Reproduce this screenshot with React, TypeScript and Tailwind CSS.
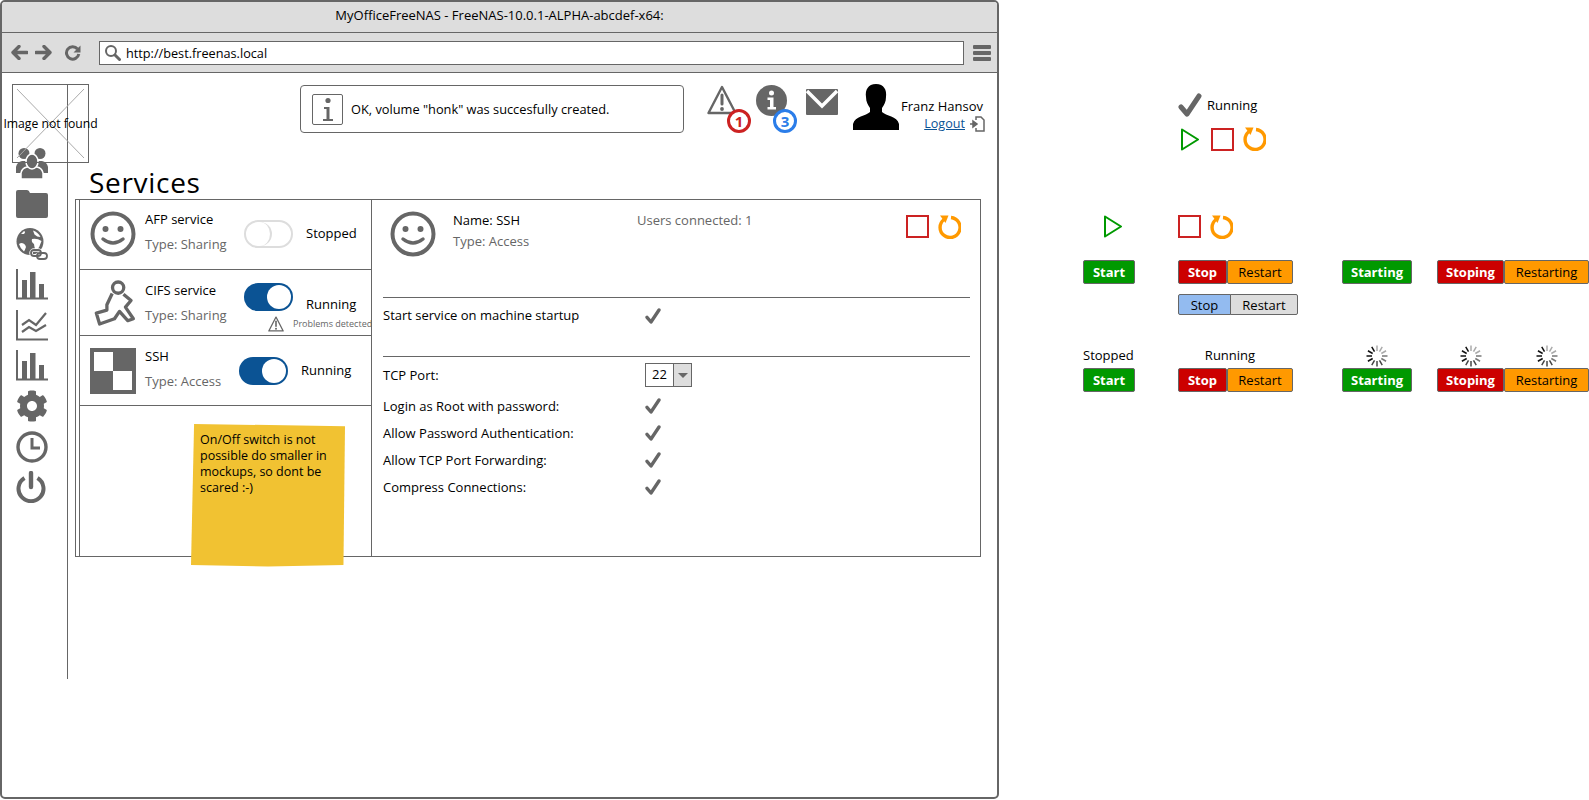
import { FaCog } from 'react-icons/fa'

const Smile = () => (
  <svg width="46" height="46" viewBox="0 0 46 46" className="shrink-0">
    <circle cx="23" cy="23" r="20.5" fill="none" stroke="#666" strokeWidth="4" />
    <circle cx="15.5" cy="18" r="3" fill="#666" />
    <circle cx="30.5" cy="18" r="3" fill="#666" />
    <path d="M13 28 Q23 36 33 28" fill="none" stroke="#666" strokeWidth="3.5" strokeLinecap="round" />
  </svg>
)

const Runner = () => (
  <svg width="43" height="48" viewBox="20 30 130 145" className="shrink-0">
    <circle cx="96" cy="56" r="17" fill="none" stroke="#666" strokeWidth="10" />
    <path d="M78 74 L62 108 L62 124 L30 133 L40 166 L85 150 L100 128 L125 156 L142 150 L118 115 L135 95 L112 76" fill="none" stroke="#666" strokeWidth="10" strokeLinejoin="round" />
  </svg>
)

const Checker = () => (
  <div className="w-[46px] h-[46px] bg-[#666] p-1 grid grid-cols-2 grid-rows-2 shrink-0">
    <div className="bg-white" />
    <div />
    <div />
    <div className="bg-white" />
  </div>
)

const Check = ({ size = 16 }: { size?: number }) => (
  <svg width={size} height={size} viewBox="0 0 24 24" className="shrink-0">
    <path d="M3 14 L9 21 L21 3" fill="none" stroke="#666" strokeWidth="5" strokeLinecap="round" strokeLinejoin="round" />
  </svg>
)

const Play = () => (
  <svg width="18" height="23" viewBox="0 0 18 23" className="shrink-0">
    <path d="M1 1.5 L17 11.5 L1 21.5 Z" fill="none" stroke="#090" strokeWidth="2" strokeLinejoin="round" />
  </svg>
)

const StopIcon = () => <div className="w-[23px] h-[23px] border-2 border-[#cc2222] shrink-0" />

const RestartIcon = () => (
  <svg width="24" height="24" viewBox="0 0 24 24" className="shrink-0">
    <path d="M7 4.5 A10 10 0 1 0 14 2.5" fill="none" stroke="#f90" strokeWidth="3.4" />
    <path d="M3 0.5 L11.5 0.5 L8.5 8 Z" fill="#f90" />
  </svg>
)

const People = () => (
  <svg width="32" height="32" viewBox="0 0 32 32">
    <g fill="#666">
      <circle cx="8" cy="6.5" r="5.5" />
      <circle cx="24" cy="6.5" r="5.5" />
      <path d="M0 26 V20 Q1 15 6 14 H10 Q15 15 16 20 V26 Z" />
      <path d="M16 26 V20 Q17 15 22 14 H26 Q31 15 32 20 V26 Z" />
      <path d="M5 32 V26 Q6 21 11 20 H21 Q26 21 27 26 V32 Z" stroke="#fff" strokeWidth="1.5" />
      <ellipse cx="16" cy="14.5" rx="6" ry="7.5" stroke="#fff" strokeWidth="1.5" />
    </g>
  </svg>
)

const Folder = () => (
  <svg width="32" height="28" viewBox="0 0 32 28">
    <path d="M0 2 Q0 0 2 0 H11 Q13 0 14 3 H30 Q32 3 32 5 V26 Q32 28 30 28 H2 Q0 28 0 26 Z" fill="#666" />
  </svg>
)

const Globe = () => (
  <svg width="32" height="33" viewBox="0 0 32 33">
    <circle cx="14" cy="13.5" r="13.5" fill="#666" />
    <path d="M17 2.5 Q22 4 24.5 9 Q21 9 18.5 6.5 Z M16 11 Q21 10 25.5 13 Q24 19 20 23 Q18 19 18 16 Q15 14 16 11 Z M5 15 Q9 15 10 19 Q9 22 8 23.5 Q4 20 3 16 Z M8 3 Q10 4 8 6 L5 6 Z" fill="#fff" />
    <g fill="none" stroke="#fff" strokeWidth="3.5">
      <rect x="15" y="22" width="10" height="6" rx="3" />
    </g>
    <g fill="none" stroke="#666" strokeWidth="1.8">
      <rect x="15" y="22" width="10" height="6" rx="3" />
      <rect x="21" y="25" width="10" height="6" rx="3" />
    </g>
  </svg>
)

const Bars = () => (
  <svg width="32" height="31" viewBox="0 0 32 31">
    <path d="M1 0 V29.5 H32" fill="none" stroke="#666" strokeWidth="2" />
    <rect x="6" y="11" width="5" height="18" fill="#666" />
    <rect x="14" y="3" width="5.5" height="26" fill="#666" />
    <rect x="23" y="15" width="5" height="14" fill="#666" />
  </svg>
)

const LineChart = () => (
  <svg width="32" height="31" viewBox="0 0 32 31">
    <path d="M1 0 V29.5 H32" fill="none" stroke="#666" strokeWidth="2" />
    <path d="M6 15 L13 10 L20 15 L30 3 M6 22 L13 17 L20 21 L30 15" fill="none" stroke="#666" strokeWidth="2.2" />
  </svg>
)

const Clock = () => (
  <svg width="32" height="32" viewBox="0 0 32 32">
    <circle cx="16" cy="16" r="14" fill="none" stroke="#666" strokeWidth="3.4" />
    <path d="M16 7 V17 H24" fill="none" stroke="#666" strokeWidth="3" />
  </svg>
)

const Power = () => (
  <svg width="30" height="32" viewBox="0 0 30 32">
    <path d="M8.5 7 A12.5 12.5 0 1 0 21.5 7" fill="none" stroke="#666" strokeWidth="4" />
    <path d="M15 2 V16" fill="none" stroke="#666" strokeWidth="4.4" strokeLinecap="round" />
  </svg>
)

const Warning = ({ size = 30 }: { size?: number }) => (
  <svg width={size} height={size} viewBox="0 0 30 30" className="shrink-0">
    <path d="M15 2 L28.5 28 H1.5 Z" fill="#fff" stroke="#666" strokeWidth="2.4" strokeLinejoin="round" />
    <path d="M15 10 V19" stroke="#666" strokeWidth="3" strokeLinecap="round" />
    <circle cx="15" cy="24" r="1.9" fill="#666" />
  </svg>
)

const Badge = ({ className, value }: { className: string; value: string }) => (
  <span className={`absolute top-[24px] w-[24px] h-[24px] rounded-full bg-white border-[3px] flex items-center justify-center text-[15px] font-bold leading-none ${className}`}>
    {value}
  </span>
)

const Toggle = ({ on }: { on: boolean }) => (
  on ? (
    <div className="w-[49px] h-[28px] rounded-full bg-[#0b5394] flex justify-end p-[2px] shrink-0">
      <div className="w-[24px] h-[24px] rounded-full bg-white" />
    </div>
  ) : (
    <div className="w-[49px] h-[28px] rounded-full border-2 border-[#ddd] flex shrink-0">
      <div className="w-[26px] h-[24px] rounded-full border-r-2 border-[#ddd]" />
    </div>
  )
)

const Spinner = () => (
  <svg width="22" height="22" viewBox="-11 -11 22 22">
    {[0, 1, 2, 3, 4, 5, 6, 7, 8, 9, 10, 11].map((i) => (
      <line
        key={i}
        x1="0"
        y1="-5"
        x2="0"
        y2="-10.5"
        stroke={i < 3 ? '#aaa' : i < 5 ? '#777' : i < 8 ? '#444' : '#111'}
        strokeWidth="1.5"
        transform={`rotate(${i * 30})`}
      />
    ))}
  </svg>
)

const Btn = ({ label, className }: { label: string; className: string }) => (
  <div className={`h-[24px] border border-[#666] rounded-[2px] flex items-center justify-center text-[13px] ${className}`}>
    {label}
  </div>
)

const sideIcons = [
  <People key="people" />,
  <Folder key="folder" />,
  <Globe key="globe" />,
  <Bars key="bars" />,
  <LineChart key="line" />,
  <Bars key="bars2" />,
  <FaCog key="cog" size={32} color="#666" />,
  <Clock key="clock" />,
  <Power key="power" />,
]

const settings = [
  'Login as Root with password:',
  'Allow Password Authentication:',
  'Allow TCP Port Forwarding:',
  'Compress Connections:',
]

export default function App() {
  return (
    <div className="w-[1589px] h-[800px] flex bg-white text-black text-[13px] leading-[16px] font-['Open_Sans','Liberation_Sans',sans-serif] overflow-hidden">
      {/* browser window */}
      <div className="w-[999px] h-[799px] border-2 border-[#666] rounded-[5px] flex flex-col shrink-0 overflow-hidden">
        <div className="h-[31px] bg-[#ddd] border-b border-[#666] text-center pt-[5px] shrink-0">
          MyOfficeFreeNAS - FreeNAS-10.0.1-ALPHA-abcdef-x64:
        </div>
        <div className="h-[40px] bg-[#ddd] border-b border-[#666] flex items-center shrink-0">
          <div className="w-[97px] flex items-center pl-[9px] gap-[7px]">
            <svg width="17" height="15" viewBox="0 0 17 15"><path d="M8 1.5 L2 7.5 L8 13.5 M3 7.5 H16" fill="none" stroke="#666" strokeWidth="3.4" strokeLinecap="round" strokeLinejoin="round" /></svg>
            <svg width="17" height="15" viewBox="0 0 17 15"><path d="M9 1.5 L15 7.5 L9 13.5 M14 7.5 H1" fill="none" stroke="#666" strokeWidth="3.4" strokeLinecap="round" strokeLinejoin="round" /></svg>
            <svg width="17" height="16" viewBox="0 0 17 16" className="ml-[5px]"><path d="M13.5 4 A6.2 6.2 0 1 0 14.8 9" fill="none" stroke="#666" strokeWidth="3" /><path d="M16.5 0.5 V7.5 H9.5 Z" fill="#666" /></svg>
          </div>
          <div className="w-[865px] h-[24px] bg-white border border-[#666] flex items-center pl-[4px] gap-[5px] text-[12.7px]">
            <svg width="17" height="17" viewBox="0 0 17 17"><circle cx="7" cy="7" r="5" fill="none" stroke="#666" strokeWidth="2" /><path d="M11 11 L15.5 15.5" stroke="#666" strokeWidth="3" strokeLinecap="round" /></svg>
            <span>http://best.freenas.local</span>
          </div>
          <div className="ml-[9px] w-[18px] flex flex-col gap-[2px]">
            <div className="h-[4px] rounded-[1px] bg-[#666]" />
            <div className="h-[4px] rounded-[1px] bg-[#666]" />
            <div className="h-[4px] rounded-[1px] bg-[#666]" />
          </div>
        </div>

        <div className="relative flex flex-1 min-h-0">
          {/* image placeholder over the sidebar */}
          <div className="absolute left-[10px] top-[11px] w-[77px] h-[79px] border border-[#666] flex items-center justify-center">
            <svg className="absolute inset-0 w-full h-full" viewBox="0 0 75 77">
              <path d="M4 4 L71 73 M71 4 L4 73" stroke="#aaa" strokeWidth="1" />
            </svg>
            <span className="relative whitespace-nowrap text-[12.2px]">Image not found</span>
          </div>

          <div className="w-[66px] h-[595px] mt-[11px] border-r border-[#666] shrink-0 flex flex-col pt-[59px]">
            {sideIcons.map((icon, i) => (
              <div key={i} className="h-[40.5px] w-full flex items-center pl-[14px]">
                {icon}
              </div>
            ))}
          </div>

          <div className="flex-1 min-w-0 pl-[7px] pt-[12px] relative">
            {/* top bar */}
            <div className="flex h-[49px]">
              <div className="ml-[225px] w-[384px] h-[48px] border border-[#666] rounded-[4px] flex items-center pl-[11px] gap-[8px] text-[12.8px]">
                <div className="w-[31px] h-[31px] border border-[#666] rounded-[2px] flex items-center justify-center">
                  <svg width="14" height="25" viewBox="0 0 14 25"><circle cx="7" cy="3.5" r="2.6" fill="#666" /><path d="M3 10 H8.5 V22 H12 V24 H2 V22 H5.5 V12 H3 Z" fill="#666" /></svg>
                </div>
                <span>OK, volume "honk" was succesfully created.</span>
              </div>
              <div className="relative ml-[23px] w-[30px]">
                <Warning />
                <Badge className="left-[20px] border-[#cc2222] text-[#cc2222]" value="1" />
              </div>
              <div className="relative ml-[19px] w-[30px]">
                <svg width="31" height="31" viewBox="0 0 31 31"><circle cx="15.5" cy="15.5" r="15.5" fill="#666" /><circle cx="15.5" cy="8" r="2.5" fill="#fff" /><path d="M11.5 12.5 H17.5 V22 H20 V24.5 H11.5 V22 H14 V15 H11.5 Z" fill="#fff" /></svg>
                <Badge className="left-[17px] border-[#2b7de9] text-[#2b7de9]" value="3" />
              </div>
              <div className="ml-[20px] pt-[4px]">
                <svg width="32" height="26" viewBox="0 0 32 26"><path d="M1 0 H31 Q32 0 32 1 V25 Q32 26 31 26 H1 Q0 26 0 25 V1 Q0 0 1 0 Z" fill="#666" /><path d="M1 2 L16 17 L31 2" fill="none" stroke="#fff" strokeWidth="3.4" /></svg>
              </div>
              <div className="ml-[15px] -mt-[1px]">
                <svg width="46" height="46" viewBox="0 0 46 46"><path d="M23 0 C31 0 34 6 33 13 C33 18 31 21 29 24 V28 C33 32 44 32 46 40 V46 H0 V40 C2 32 13 32 17 28 V24 C15 21 13 18 13 13 C12 6 15 0 23 0 Z" fill="#000" /></svg>
              </div>
              <div className="ml-[4px] w-[80px] flex flex-col items-end pt-[13px] leading-[17px] text-[13px]">
                <span className="whitespace-nowrap">Franz Hansov</span>
                <div className="flex items-center gap-[4px] -mr-[2px] text-[12.6px]">
                  <span className="text-[#0b5394] underline">Logout</span>
                  <svg width="16" height="16" viewBox="0 0 16 16"><path d="M7 4 V1 H12 L15 4 V15 H7 V12" fill="none" stroke="#666" strokeWidth="1.5" /><path d="M1 8 H6 M4 5 L8 8 L4 11 Z" stroke="#666" fill="#666" strokeWidth="1.5" /></svg>
                </div>
              </div>
            </div>

            <h1 className="ml-[14px] mt-[32px] text-[28px] tracking-[0.7px] leading-[32px] h-[33px]">Services</h1>

            {/* services panel */}
            <div className="relative w-[906px] h-[358px] border border-[#666] pl-[3px] flex">
              <div className="w-[293px] border-x border-[#666] flex flex-col shrink-0">
                <div className="h-[70px] border-b border-[#666] flex items-center pl-[10px] pb-[1px] shrink-0">
                  <Smile />
                  <div className="ml-[9px] w-[99px] shrink-0 leading-[25px] pb-[5px]">
                    <div>AFP service</div>
                    <div className="text-[#666] whitespace-nowrap">Type: Sharing</div>
                  </div>
                  <Toggle on={false} />
                  <span className="ml-[13px] mb-[2px]">Stopped</span>
                </div>
                <div className="h-[66px] border-b border-[#666] flex pl-[13px] shrink-0">
                  <div className="self-center flex items-center">
                    <Runner />
                    <div className="ml-[9px] w-[99px] shrink-0 leading-[25px]">
                      <div>CIFS service</div>
                      <div className="text-[#666] whitespace-nowrap">Type: Sharing</div>
                    </div>
                  </div>
                  <div className="flex flex-col mt-[13px]">
                    <div className="flex">
                      <Toggle on />
                      <span className="ml-[13px] mt-[13px]">Running</span>
                    </div>
                    <div className="flex items-center mt-[4px] ml-[24px]">
                      <Warning size={16} />
                      <span className="ml-[9px] text-[9px] leading-[12px] text-[#666] whitespace-nowrap">Problems detected</span>
                    </div>
                  </div>
                </div>
                <div className="h-[70px] border-b border-[#666] flex items-center pl-[10px] shrink-0">
                  <Checker />
                  <div className="ml-[9px] w-[94px] shrink-0 leading-[25px] pb-[4px]">
                    <div>SSH</div>
                    <div className="text-[#666] whitespace-nowrap">Type: Access</div>
                  </div>
                  <Toggle on />
                  <span className="ml-[13px] mb-[2px]">Running</span>
                </div>
              </div>

              <div className="flex-1 min-w-0 flex flex-col pl-[11px] pr-[10px]">
                <div className="h-[98px] flex border-b border-[#666] shrink-0 pt-[11px]">
                  <div className="ml-[7px]"><Smile /></div>
                  <div className="ml-[17px] w-[184px] leading-[21px] -mt-[1px]">
                    <div>Name: SSH</div>
                    <div className="text-[#666]">Type: Access</div>
                  </div>
                  <div className="text-[#666] leading-[21px] -mt-[1px]">Users connected: 1</div>
                  <div className="ml-auto flex gap-[8px] pt-[4px] pr-[9px]">
                    <StopIcon />
                    <RestartIcon />
                  </div>
                </div>
                <div className="h-[59px] border-b border-[#666] shrink-0 pt-[10px] flex items-start">
                  <span className="w-[262px] -mt-[1px]">Start service on machine startup</span>
                  <Check />
                </div>
                <div className="flex items-center mt-[6px] h-[24px]">
                  <span className="w-[262px]">TCP Port:</span>
                  <div className="w-[47px] h-[24px] border border-[#666] flex">
                    <span className="w-[27px] text-center leading-[20px]">22</span>
                    <div className="flex-1 bg-[#ddd] border-l border-[#666] flex items-center justify-center">
                      <div className="border-x-[5px] border-x-transparent border-t-[5px] border-t-[#666]" />
                    </div>
                  </div>
                </div>
                <div className="mt-[5px]">
                  {settings.map((label) => (
                    <div key={label} className="flex items-center h-[27px]">
                      <span className="w-[262px]">{label}</span>
                      <Check />
                    </div>
                  ))}
                </div>
              </div>

              {/* sticky note */}
              <div className="absolute left-[115px] top-[224px] w-[154px] h-[144px] bg-[#f1c232] pl-[9px] pr-[4px] pt-[8px] leading-[16px] text-[12.5px] [clip-path:polygon(2%_0,100%_1.5%,99%_98%,50%_99%,0_98%)]">
                On/Off switch is not possible do smaller in mockups, so dont be scared :-)
              </div>
            </div>
          </div>
        </div>
      </div>

      {/* state variants */}
      <div className="flex-1 pl-[84px] pt-[93px] grid grid-cols-[95px_164px_95px_1fr] grid-rows-[122px_45px_33px_51px_24px] content-start">
        <div />
        <div>
          <div className="flex items-center gap-[5px] h-[24px]">
            <Check size={24} />
            <span>Running</span>
          </div>
          <div className="flex items-center mt-[10px] ml-[3px]">
            <Play />
            <div className="ml-[12px]"><StopIcon /></div>
            <div className="ml-[8px]"><RestartIcon /></div>
          </div>
        </div>
        <div />
        <div />

        <div className="pl-[21px]"><Play /></div>
        <div className="flex gap-[8px]">
          <StopIcon />
          <RestartIcon />
        </div>
        <div />
        <div />

        <Btn label="Start" className="w-[52px] bg-[#090] text-white font-bold" />
        <div className="flex">
          <Btn label="Stop" className="w-[49px] bg-[#c00] text-white font-bold" />
          <Btn label="Restart" className="w-[66px] bg-[#f90]" />
        </div>
        <Btn label="Starting" className="w-[70px] bg-[#090] text-white font-bold" />
        <div className="flex">
          <Btn label="Stoping" className="w-[67px] bg-[#c00] text-white font-bold" />
          <Btn label="Restarting" className="w-[85px] bg-[#f90]" />
        </div>

        <div />
        <div className="flex h-[21px] mt-[1px]">
          <div className="w-[53px] bg-[#93bbf0] border border-[#666] rounded-l-[2px] flex items-center justify-center">Stop</div>
          <div className="w-[68px] -ml-px bg-[#ddd] border border-[#666] rounded-r-[2px] flex items-center justify-center">Restart</div>
        </div>
        <div />
        <div />

        <div className="pt-[3px]">Stopped</div>
        <div className="w-[104px] pt-[3px] text-center">Running</div>
        <div className="w-[70px] flex justify-center items-end pb-[1px]"><Spinner /></div>
        <div className="flex items-end pb-[1px]">
          <div className="w-[67px] flex justify-center"><Spinner /></div>
          <div className="w-[85px] flex justify-center"><Spinner /></div>
        </div>

        <Btn label="Start" className="w-[52px] bg-[#090] text-white font-bold" />
        <div className="flex">
          <Btn label="Stop" className="w-[49px] bg-[#c00] text-white font-bold" />
          <Btn label="Restart" className="w-[66px] bg-[#f90]" />
        </div>
        <Btn label="Starting" className="w-[70px] bg-[#090] text-white font-bold" />
        <div className="flex">
          <Btn label="Stoping" className="w-[67px] bg-[#c00] text-white font-bold" />
          <Btn label="Restarting" className="w-[85px] bg-[#f90]" />
        </div>
      </div>
    </div>
  )
}
